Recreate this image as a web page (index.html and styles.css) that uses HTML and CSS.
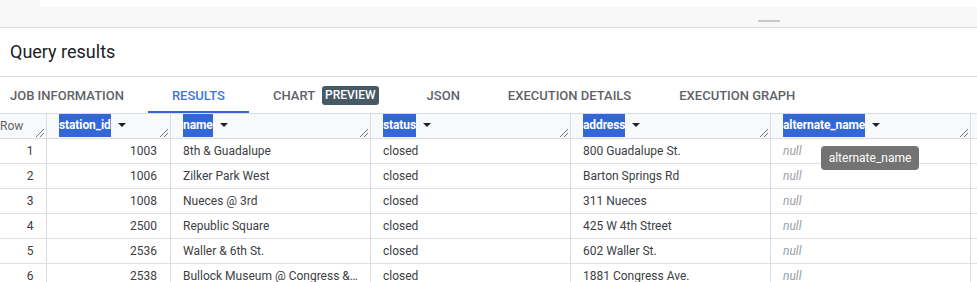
FILE: index.html
```html
<!DOCTYPE html>
<html>
<head>
<meta charset="utf-8">
<link rel="stylesheet" href="styles.css">
</head>
<body>
<div class="topbar">
  <div class="editor-edge"></div>
  <div class="handle-row"><div class="handle"></div></div>
</div>
<div class="title">Query results</div>
<div class="tabs">
  <div class="tab first">JOB INFORMATION</div>
  <div class="tab active">RESULTS</div>
  <div class="tab">CHART <span class="badge">PREVIEW</span></div>
  <div class="tab">JSON</div>
  <div class="tab">EXECUTION DETAILS</div>
  <div class="tab">EXECUTION GRAPH</div>
</div>
<div class="grid">
  <div class="row head">
    <div class="cell rowcol hcell">Row<svg class="rz" viewBox="0 0 8 8"><path d="M8 0 L0 8 M8 4 L4 8" stroke="#777" stroke-width="1"/></svg></div>
    <div class="cell hcell"><span class="hl">station_id</span><span class="arrow"></span><svg class="rz" viewBox="0 0 8 8"><path d="M8 0 L0 8 M8 4 L4 8" stroke="#777" stroke-width="1"/></svg></div>
    <div class="cell hcell"><span class="hl">name</span><span class="arrow"></span><svg class="rz" viewBox="0 0 8 8"><path d="M8 0 L0 8 M8 4 L4 8" stroke="#777" stroke-width="1"/></svg></div>
    <div class="cell hcell"><span class="hl">status</span><span class="arrow"></span><svg class="rz" viewBox="0 0 8 8"><path d="M8 0 L0 8 M8 4 L4 8" stroke="#777" stroke-width="1"/></svg></div>
    <div class="cell hcell"><span class="hl">address</span><span class="arrow"></span><svg class="rz" viewBox="0 0 8 8"><path d="M8 0 L0 8 M8 4 L4 8" stroke="#777" stroke-width="1"/></svg></div>
    <div class="cell hcell"><span class="hl">alternate_name</span><span class="arrow"></span><svg class="rz" viewBox="0 0 8 8"><path d="M8 0 L0 8 M8 4 L4 8" stroke="#777" stroke-width="1"/></svg></div>
    <div class="cell hcell last"></div>
  </div>
  <div class="row"><div class="cell rowcol num">1</div><div class="cell numr">1003</div><div class="cell">8th &amp; Guadalupe</div><div class="cell">closed</div><div class="cell">800 Guadalupe St.</div><div class="cell null">null</div><div class="cell last"></div></div>
  <div class="row"><div class="cell rowcol num">2</div><div class="cell numr">1006</div><div class="cell">Zilker Park West</div><div class="cell">closed</div><div class="cell">Barton Springs Rd</div><div class="cell null">null</div><div class="cell last"></div></div>
  <div class="row"><div class="cell rowcol num">3</div><div class="cell numr">1008</div><div class="cell">Nueces @ 3rd</div><div class="cell">closed</div><div class="cell">311 Nueces</div><div class="cell null">null</div><div class="cell last"></div></div>
  <div class="row"><div class="cell rowcol num">4</div><div class="cell numr">2500</div><div class="cell">Republic Square</div><div class="cell">closed</div><div class="cell">425 W 4th Street</div><div class="cell null">null</div><div class="cell last"></div></div>
  <div class="row"><div class="cell rowcol num">5</div><div class="cell numr">2536</div><div class="cell">Waller &amp; 6th St.</div><div class="cell">closed</div><div class="cell">602 Waller St.</div><div class="cell null">null</div><div class="cell last"></div></div>
  <div class="row"><div class="cell rowcol num">6</div><div class="cell numr">2538</div><div class="cell ell">Bullock Museum @ Congress &amp; MLK</div><div class="cell">closed</div><div class="cell">1881 Congress Ave.</div><div class="cell null">null</div><div class="cell last"></div></div>
  <div class="tooltip">alternate_name</div>
</div>
</body>
</html>
```
FILE: styles.css
```css
* { box-sizing: border-box; }
html, body { margin: 0; padding: 0; }
body {
  font-family: Roboto, "Liberation Sans", sans-serif;
  background: #fff;
  width: 977px;
  height: 282px;
  overflow: hidden;
  color: #3c4043;
}
.topbar {
  height: 28px;
  background: #f8f8f8;
  border-bottom: 1px solid #dadce0;
}
.editor-edge {
  margin-left: 40px;
  height: 7px;
  background: #fff;
}
.handle-row {
  padding-top: 13px;
  padding-left: 758px;
}
.handle {
  width: 22px;
  height: 2px;
  background: #c8c8c8;
}
.title {
  height: 49px;
  border-bottom: 1px solid #dadce0;
  padding-left: 10px;
  font-size: 18px;
  line-height: 48px;
  color: #202124;
}
.tabs {
  display: flex;
  height: 36px;
}
.tab {
  padding: 0 24px;
  font-size: 13px;
  font-weight: 500;
  color: #5f6368;
  display: flex;
  align-items: center;
  white-space: nowrap;
  border-bottom: 2px solid transparent;
  padding-top: 2px;
}
.tab.first { padding-left: 10px; }
.tab.active {
  color: #3c78d8;
  border-bottom-color: #3367d6;
}
.badge {
  display: inline-block;
  margin-left: 7px;
  background: #455a64;
  color: #fff;
  border-radius: 3px;
  height: 19px;
  line-height: 19px;
  padding: 0 3px;
  font-size: 12px;
}
.grid {
  position: relative;
  border-top: 1px solid #dadce0;
}
.row {
  display: grid;
  grid-template-columns: 47px 124px 200px 200px 200px 200px 1fr;
  height: 25px;
}
.cell {
  border-right: 1px solid #dadce0;
  border-bottom: 1px solid #e0e0e0;
  font-size: 12px;
  line-height: 24px;
  padding: 0 12px;
  white-space: nowrap;
  overflow: hidden;
  color: #3c4043;
}
.cell.last { border-right: none; }
.head .cell { background: #f8f9fa; border-bottom-color: #dadce0; }
.hcell {
  position: relative;
  display: flex;
  align-items: stretch;
}
.rowcol { padding: 0 0 0 14px; }
.head .rowcol { padding: 0; color: #5f6368; font-size: 12px; }
.num { text-align: center; }
.numr { text-align: right; padding-right: 13px; }
.ell { text-overflow: ellipsis; }
.null { color: #9aa0a6; font-style: italic; }
.hl {
  background: #3367d6;
  color: #fff;
  font-weight: 700;
  line-height: 23px;
  height: 23px;
  letter-spacing: -0.1px;
}
.arrow {
  align-self: center;
  margin-left: 7px;
  width: 0;
  height: 0;
  border-left: 4px solid transparent;
  border-right: 4px solid transparent;
  border-top: 4px solid #202124;
  margin-top: -2px;
}
.rz {
  position: absolute;
  right: 2px;
  bottom: 1px;
  width: 8px;
  height: 8px;
}
.tooltip {
  position: absolute;
  left: 821px;
  top: 32px;
  width: 98px;
  height: 24px;
  background: #737373;
  color: #fff;
  font-size: 12px;
  line-height: 24px;
  text-align: center;
  border-radius: 4px;
}
```
